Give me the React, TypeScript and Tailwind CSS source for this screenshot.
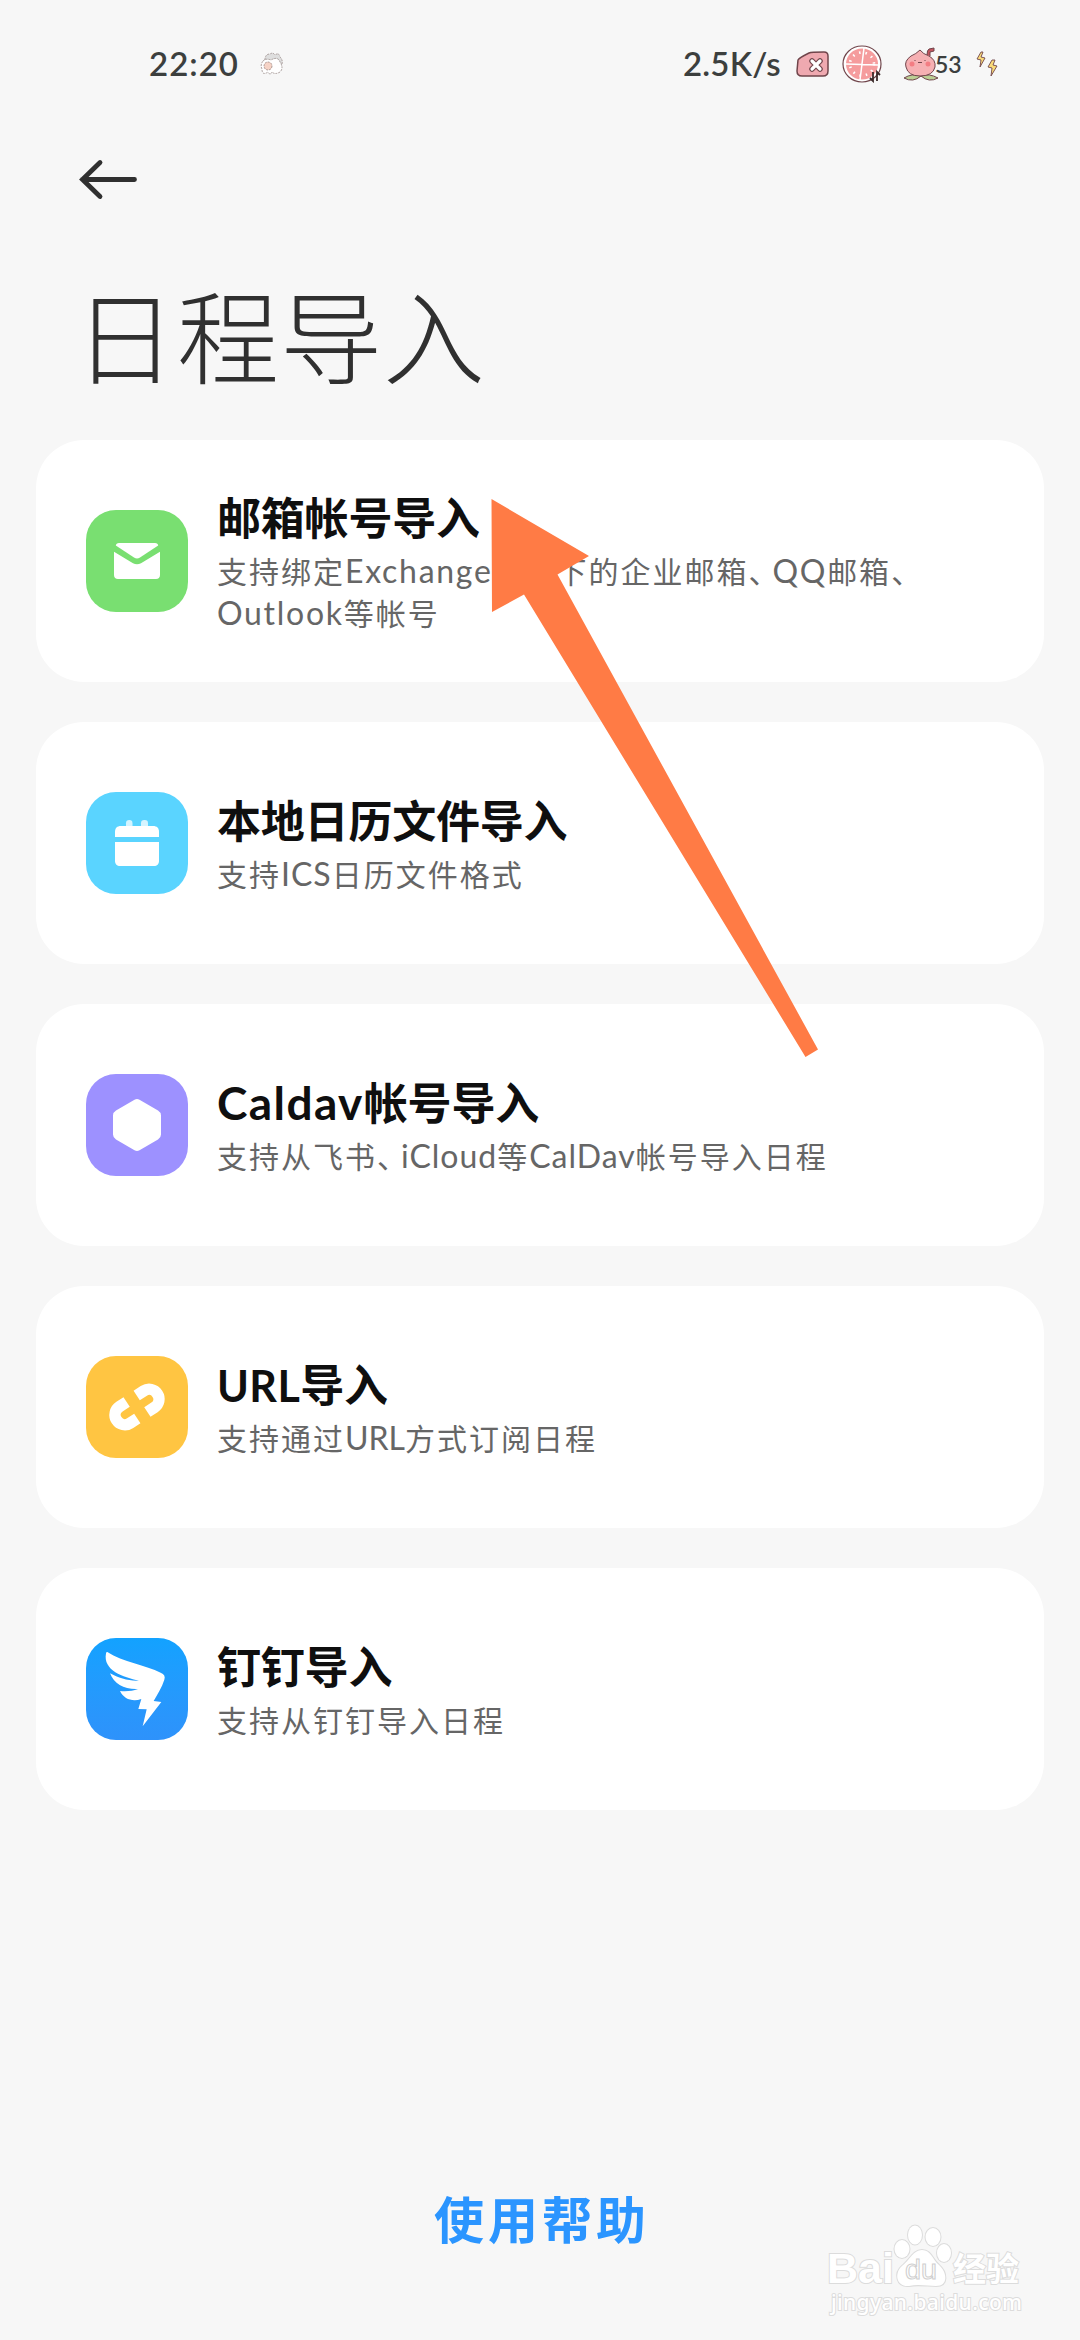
import type { ReactNode } from "react";

const LATIN = "font-['Lato','Noto_Sans_CJK_SC',sans-serif]";

// Latin runs and the ideographic comma are set a bit differently from the Han text
function Mixed({ text, latin }: { text: string; latin: string }) {
  return (
    <>
      {text.split(/([A-Za-z]+|、)/).map((part, i) => {
        if (part === "、") {
          return (
            <span key={i} className="tracking-[-6px]">
              {part}
            </span>
          );
        }
        return /^[A-Za-z]/.test(part) ? (
          <span key={i} className={`${LATIN} ${latin}`}>
            {part}
          </span>
        ) : (
          part
        );
      })}
    </>
  );
}

function MailIcon() {
  return (
    <svg viewBox="0 0 102 102" className="size-full" fill="#fff">
      <path d="M33 33h36c2 0 3 1.2 3.2 2.4L54 47.600c-2 1.300-4 1.300-6 0L29.800 35.400c.3-1.300 1.200-2.400 3.200-2.400z" />
      <path d="M28 41.800l19 11.400c2.700 1.500 5.300 1.500 8 0l19-11.400V65c0 2.500-1.500 4-4 4H32c-2.500 0-4-1.500-4-4z" />
    </svg>
  );
}

function CalendarIcon() {
  return (
    <svg viewBox="0 0 102 102" className="size-full" fill="#fff">
      <rect x="40" y="28" width="6.500" height="9" rx="3.200" opacity="0.75" />
      <rect x="55" y="28" width="7" height="9" rx="3.200" opacity="0.75" />
      <path d="M35 34h32c4 0 6 2 6 6v5H29v-5c0-4 2-6 6-6z" />
      <path d="M29 50h44v19c0 3-2 5-5 5H34c-3 0-5-2-5-5z" />
    </svg>
  );
}

function HexagonIcon() {
  return (
    <svg viewBox="0 0 102 102" className="size-full" fill="#fff">
      <path d="M48.500 25.800q2.500-1.600 5 0L72 36.500q3 1.800 3 5v19q0 3.200-3 5L53.500 76.200q-2.500 1.600-5 0L30 65.500q-3-1.800-3-5v-19q0-3.200 3-5z" />
    </svg>
  );
}

function LinkIcon() {
  return (
    <svg viewBox="0 0 102 102" className="size-full" fill="none" stroke="#fff" strokeWidth="11.500">
      <g transform="translate(51 51) rotate(-33)">
        <path d="M-6-9.800H-14.500a9.800 9.800 0 0 0 0 19.600H-6" />
        <path d="M6-9.800H14.500a9.800 9.800 0 0 1 0 19.600H6" />
      </g>
    </svg>
  );
}

function WingIcon() {
  return (
    <svg viewBox="0 0 306 306" className="size-full" fill="#fff">
      <path d="M64 42C110 72 180 82 224 104Q240 110 235 125C228 148 213 170 203 189L226 192L170 265L182 214L157 213L166 183C140 192 114 184 102 159C122 161 140 159 156 153C116 155 84 138 72 106C98 120 128 130 159 128C112 118 50 98 60 46Q61 41 64 42Z" />
    </svg>
  );
}

type Item = {
  title: string;
  desc: string[];
  tile: string;
  icon: ReactNode;
  titleLatin?: string;
  descLatin?: string;
};

const items: Item[] = [
  {
    title: "邮箱帐号导入",
    desc: ["支持绑定Exchange协议下的企业邮箱、QQ邮箱、", "Outlook等帐号"],
    tile: "bg-[#79df71]",
    icon: <MailIcon />,
    descLatin: "text-[32px] tracking-[1.7px]",
  },
  {
    title: "本地日历文件导入",
    desc: ["支持ICS日历文件格式"],
    tile: "bg-[#5ad4ff]",
    icon: <CalendarIcon />,
    descLatin: "text-[32px] tracking-[1px]",
  },
  {
    title: "Caldav帐号导入",
    desc: ["支持从飞书、iCloud等CalDav帐号导入日程"],
    tile: "bg-[#9d91ff]",
    icon: <HexagonIcon />,
    titleLatin: "text-[46px] tracking-[1.4px]",
    descLatin: "text-[32px] tracking-[1px]",
  },
  {
    title: "URL导入",
    desc: ["支持通过URL方式订阅日程"],
    tile: "bg-[#ffc542]",
    icon: <LinkIcon />,
    titleLatin: "text-[43px] tracking-[0.4px]",
    descLatin: "text-[32px] tracking-[0px]",
  },
  {
    title: "钉钉导入",
    desc: ["支持从钉钉导入日程"],
    tile: "bg-linear-to-b from-[#12a2ff] to-[#2e92fb]",
    icon: <WingIcon />,
  },
];

function ImportCard({ title, desc, tile, icon, titleLatin = "", descLatin = "" }: Item) {
  return (
    <button className="flex h-[242px] w-full items-center rounded-[48px] bg-white pl-[50px] text-left">
      <span className={`block size-[102px] shrink-0 overflow-hidden rounded-[30px] ${tile}`}>{icon}</span>
      <span className="ml-[29px] flex flex-col">
        <span className="mb-[3px] h-[56px] text-[44px] leading-[53px] font-bold tracking-[-0.2px] whitespace-nowrap text-[#0f0f0f]">
          <Mixed text={title} latin={titleLatin} />
        </span>
        {desc.map((line) => (
          <span
            key={line}
            className="h-[42px] text-[30px] leading-[42px] tracking-[2px] whitespace-nowrap text-[#666]"
          >
            <Mixed text={line} latin={descLatin} />
          </span>
        ))}
      </span>
    </button>
  );
}

function StatusBar() {
  return (
    <div className={`flex h-[128px] items-center pl-[149px] text-[#3c3f3e] ${LATIN}`}>
      <span className="w-[90px] text-[33px] font-semibold tracking-[1px]">22:20</span>
      {/* sheep */}
      <svg viewBox="0 0 24 24" className="ml-[21px] size-[24px]" stroke="#8b7b79" strokeWidth="0.700" strokeDasharray="2 1">
        <path d="M5 8Q5 2 10 2Q13 0 15 3Q19 0 20 5Q24 9 21 14L14 16L8 10z" fill="#dedede" />
        <path d="M3 9Q6 6 11 8Q18 4 20 10Q24 16 20 20Q15 23 12 20Q10 24 8 20Q2 24 2 17Q0 13 3 9z" fill="#fff" />
        <circle cx="8" cy="14" r="4" fill="#f6d3c6" />
      </svg>
      <span className="ml-[399px] w-[100px] text-[33px] font-semibold tracking-[0.2px]">2.5K/s</span>
      {/* sim card */}
      <svg viewBox="0 0 33 26" className="ml-[13px] h-[26px] w-[33px]">
        <path d="M2 9Q3 7 13 2Q15 1 28 1Q32 1 32 5V20Q32 25 27 25H6Q1 25 1 20z" fill="#efa9b0" stroke="#70454b" strokeWidth="1.500" />
        <path d="M16 10l8 8M24 10l-8 8" stroke="#70454b" strokeWidth="5.500" strokeLinecap="round" />
        <path d="M16 10l8 8M24 10l-8 8" stroke="#fff" strokeWidth="3.200" strokeLinecap="round" />
      </svg>
      {/* wifi slice */}
      <svg viewBox="0 0 40 38" className="ml-[13px] h-[38px] w-[40px]">
        <ellipse cx="20" cy="19" rx="19" ry="18" fill="#fff" stroke="#70454b" strokeWidth="1.200" />
        <ellipse cx="20" cy="19" rx="16" ry="15.500" fill="#f59c9d" />
        <path d="M22 3L18 35M4 19L36 20" stroke="#fff" strokeWidth="1.500" />
        <ellipse cx="20" cy="19" rx="12" ry="11.500" fill="none" stroke="#fff" strokeWidth="2.600" strokeDasharray="1.500 5" />
        <path d="M31 27v9l-3-3M35 36v-9l3 3" stroke="#3a2929" strokeWidth="1.800" fill="none" />
      </svg>
      {/* peach battery */}
      <svg viewBox="0 0 36 34" className="ml-[21px] h-[34px] w-[36px]" stroke="#70454b" strokeWidth="1">
        <path d="M18 29Q9 26 1 31Q10 36 18 29Q26 26 35 31Q26 36 18 29z" fill="#bccf94" />
        <path d="M17 3Q13 7 8 9Q1 14 3 20Q5 29 17 29Q30 29 32 20Q33 13 26 9Q20 7 17 3z" fill="#f6b0b3" />
        <path d="M24 8Q24 3 26 2L31 1V4L27 5V9" fill="#c4555f" />
        <path d="M12 13v1M22 13v1M15 15q1 2 2 0q1 2 2 0" fill="none" />
        <circle cx="9" cy="17" r="2.500" fill="#f37d83" stroke="none" />
        <circle cx="25" cy="17" r="2.500" fill="#f37d83" stroke="none" />
      </svg>
      <span className="-ml-[4px] w-[27px] text-[23px] font-semibold tracking-[0px]">53</span>
      {/* charging bolts */}
      <svg viewBox="0 0 22 26" className="ml-[14px] h-[26px] w-[22px]" fill="#fadb78" stroke="#70454b" strokeWidth="0.900" strokeLinejoin="round">
        <path d="M5 1L1 8l4 1-1 7 5-9-4-1 2-5z" />
        <path d="M16 9l-4 7 4 1-1 8 6-10-4-1 2-5z" />
      </svg>
    </div>
  );
}

function Pointer() {
  return (
    <svg viewBox="0 0 328 560" className="pointer-events-none absolute top-[498px] left-[491px] h-[560px] w-[328px]">
      <polygon points="0.500,1 98,58 66.500,76.500 327,551.500 314.500,559 33,96.500 1,114" fill="#ff7b45" />
    </svg>
  );
}

function Watermark() {
  const outline = "fill-white stroke-[#dcdcdc] stroke-[2px] [paint-order:stroke]";
  return (
    <svg viewBox="-6 0 220 110" className="absolute right-[36px] bottom-[11px] h-[110px] w-[220px]">
      <g className={outline}>
        <text x="-3" y="64" className="font-['Liberation_Sans',sans-serif] text-[43px] font-bold" textLength="67" lengthAdjust="spacingAndGlyphs">
          Bai
        </text>
        <ellipse cx="72" cy="30" rx="7.500" ry="9" />
        <ellipse cx="85" cy="16" rx="7" ry="9.500" />
        <ellipse cx="103" cy="18" rx="7.500" ry="9" />
        <ellipse cx="114" cy="34" rx="7" ry="9" />
        <path d="M92 31c9 0 10 9 17 15 8 7 10 21-3 21-8 0-18-2-27 0-13 1-15-13-7-20 8-6 11-16 20-16z" />
        <text x="123" y="62" className="font-['Noto_Sans_CJK_SC',sans-serif] text-[33px] font-bold">
          经验
        </text>
        <text x="1" y="91" className="font-['Noto_Sans',sans-serif] text-[21px] font-medium" textLength="191">
          jingyan.baidu.com
        </text>
      </g>
      <text x="75" y="60" className="fill-white stroke-[#cfcfcf] font-['Liberation_Sans',sans-serif] text-[27px]" textLength="32" lengthAdjust="spacingAndGlyphs">
        du
      </text>
    </svg>
  );
}

export default function App() {
  return (
    <div className="relative flex h-[2340px] w-[1080px] flex-col overflow-hidden bg-[#f7f7f7] font-['Noto_Sans_CJK_SC',sans-serif]">
      <StatusBar />
      <header className="flex h-[312px] flex-col pl-[79px]">
        <svg viewBox="0 0 60 42" className="mt-[31px] h-[42px] w-[60px]" fill="none" stroke="#303030" strokeWidth="4.800" strokeLinecap="round">
          <path d="M55.500 20.500H3.500M21 3.500L3.500 20.500L21 37.500" />
        </svg>
        <h1 className="mt-[62px] -ml-[5px] text-[102px] leading-[140px] font-light tracking-[1px] text-[#303030]">
          日程导入
        </h1>
      </header>
      <main className="flex flex-col gap-10 px-9">
        {items.map((item) => (
          <ImportCard key={item.title} {...item} />
        ))}
      </main>
      <footer className="mt-auto flex h-[183px] justify-center pl-[4px]">
        <button className="h-[120px] text-[50px] leading-[120px] font-bold tracking-[4px] text-[#2b95ff]">
          使用帮助
        </button>
      </footer>
      <Pointer />
      <Watermark />
    </div>
  );
}
